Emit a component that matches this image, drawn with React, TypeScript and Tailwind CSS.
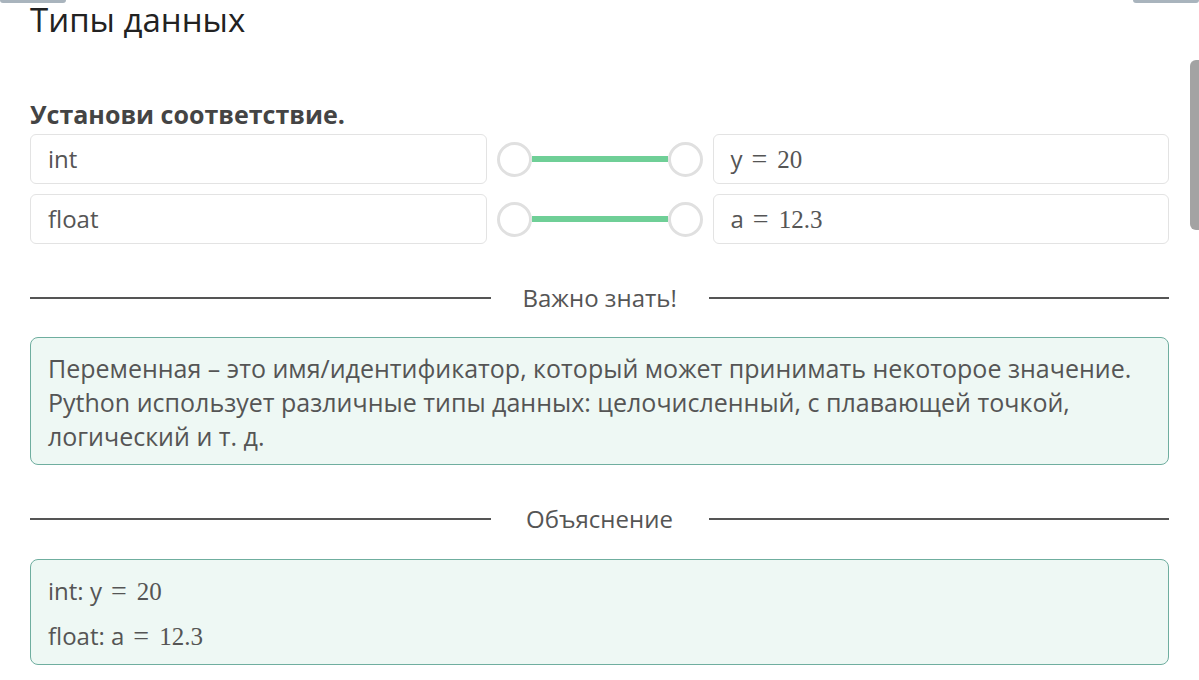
import React from "react";

const sans = "font-['Open_Sans',sans-serif]";

const Math = ({ v, n }: { v: string; n: string }) => (
  <span>
    {v}
    <span className="font-['Liberation_Serif',serif] text-[28px] leading-none ml-[9px] mr-[10px]">=</span>
    <span className="font-['Liberation_Serif',serif] text-[25px] leading-none">{n}</span>
  </span>
);

const Connector = () => (
  <div className="flex items-center w-[226px] px-[10px]">
    <div className="w-[35px] h-[35px] rounded-full border-[3px] border-[#e0e0e0] bg-white shrink-0"></div>
    <div className="flex-1 h-[6px] bg-[#6fcf97]"></div>
    <div className="w-[35px] h-[35px] rounded-full border-[3px] border-[#e0e0e0] bg-white shrink-0"></div>
  </div>
);

const Row = ({ left, v, n }: { left: string; v: string; n: string }) => (
  <div className="flex items-center h-[50px]">
    <div className="flex-1 h-full flex items-center px-[17px] border border-[#e3e3e3] rounded-[6px] text-[24px] text-[#555]">
      {left}
    </div>
    <Connector />
    <div className="flex-1 h-full flex items-center px-[17px] border border-[#e3e3e3] rounded-[6px] text-[24px] text-[#555]">
      <Math v={v} n={n} />
    </div>
  </div>
);

const Divider = ({ label }: { label: string }) => (
  <div className="flex items-center gap-[32px] h-[30px]">
    <div className="flex-1 h-[2px] bg-[#555]"></div>
    <span className="text-[24px] text-[#555] w-[154px] text-center whitespace-nowrap">{label}</span>
    <div className="flex-1 h-[2px] bg-[#555]"></div>
  </div>
);

const App = () => {
  return (
    <div className={`relative w-[1199px] h-[680px] overflow-hidden bg-white ${sans}`}>
      <div className="absolute left-0 top-0 w-[66px] h-[3px] rounded-b-[3px] bg-[#a9b4bd]"></div>
      <div className="absolute right-0 top-0 w-[66px] h-[3px] rounded-b-[3px] bg-[#a9b4bd]"></div>
      <div className="absolute right-0 top-[60px] w-[9px] h-[170px] rounded-l-[6px] bg-[#a3a3a3]"></div>

      <div className="flex flex-col w-[1139px] ml-[30px]">
        <h1 className="text-[33px] leading-[40px] text-[#222] font-normal">Типы данных</h1>
        <h2 className="mt-[57px] text-[25px] leading-[34px] font-bold text-[#444]">Установи соответствие.</h2>
        <div className="flex flex-col gap-[10px] mt-[3px]">
          <Row left="int" v="y" n="20" />
          <Row left="float" v="a" n="12.3" />
        </div>

        <div className="mt-[39px]">
          <Divider label="Важно знать!" />
        </div>

        <div className="mt-[24px] bg-[#eef8f4] border border-[#6fae9f] rounded-[8px] px-[17px] pt-[13px] pb-[11px] text-[25px] leading-[34px] text-[#555]">
          Переменная – это имя/идентификатор, который может принимать некоторое значение. Python использует различные типы данных: целочисленный, с плавающей точкой, логический и т. д.
        </div>

        <div className="mt-[39px]">
          <Divider label="Объяснение" />
        </div>

        <div className="mt-[25px] bg-[#eef8f4] border border-[#6fae9f] rounded-[8px] px-[17px] pt-[14px] pb-[11px] text-[24px] leading-[34px] text-[#555] flex flex-col gap-[11px]">
          <div>
            int: <Math v="y" n="20" />
          </div>
          <div>
            float: <Math v="a" n="12.3" />
          </div>
        </div>
      </div>
    </div>
  );
};

export default App;
